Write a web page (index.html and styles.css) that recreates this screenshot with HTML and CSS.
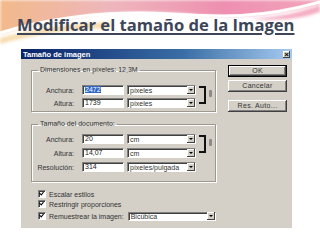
FILE: index.html
```html
<!DOCTYPE html>
<html lang="es">
<head>
	<meta charset="UTF-8">
	<title>Modificar el tamaño de la Imagen</title>
	<link rel="stylesheet" href="styles.css">
</head>
<body>

	<svg class="deco" width="320" height="50" viewBox="0 0 320 50">
		<defs>
			<linearGradient id="wash" x1="0" y1="0" x2="1" y2="0">
				<stop offset="0" stop-color="#f2b98a"/>
				<stop offset="0.35" stop-color="#eeb6bc"/>
				<stop offset="0.7" stop-color="#ee8fb0"/>
				<stop offset="1" stop-color="#f2a6bd"/>
			</linearGradient>
			<filter id="soft"><feGaussianBlur stdDeviation="1.8"/></filter>
		</defs>
		<path d="M0 0 H320 V4 C280 14 240 19 200 15 C150 10 100 12 60 20 C30 26 10 30 0 34 Z" fill="url(#wash)" filter="url(#soft)"/>
		<path d="M0 38 C30 30 60 24 110 22 L110 28 C60 30 30 36 0 44 Z" fill="#f4d096" opacity="0.75" filter="url(#soft)"/>
		<path d="M250 19 C280 17 302 12 320 5 V12 C300 19 280 21 250 19 Z" fill="#f29ab5" opacity="0.8" filter="url(#soft)"/>
		<path d="M0 33 C40 20 100 10 170 14 C220 17 260 19 320 2" stroke="#fff" stroke-width="3" fill="none"/>
	</svg>

	<h1 class="title">Modificar el tamaño de la Imagen</h1>

	<div class="dialog">
		<div class="titlebar">
			<span>Tamaño de imagen</span>
			<span class="close">×</span>
		</div>
		<div class="dialog-body">
			<div class="main">

				<fieldset class="group group-pixels">
					<legend>Dimensiones en píxeles: 12,3M</legend>
					<div class="linked">
						<div class="rows">
							<div class="row">
								<span class="label">Anchura:</span>
								<span class="field"><span class="selected">2472</span></span>
								<span class="select"><span>píxeles</span><i class="arrow"></i></span>
							</div>
							<div class="row">
								<span class="label">Altura:</span>
								<span class="field">1739</span>
								<span class="select"><span>píxeles</span><i class="arrow"></i></span>
							</div>
						</div>
						<span class="bracket"></span>
						<span class="chain"></span>
					</div>
				</fieldset>

				<fieldset class="group group-doc">
					<legend>Tamaño del documento:</legend>
					<div class="linked">
						<div class="rows">
							<div class="row">
								<span class="label">Anchura:</span>
								<span class="field">20</span>
								<span class="select"><span>cm</span><i class="arrow"></i></span>
							</div>
							<div class="row">
								<span class="label">Altura:</span>
								<span class="field">14,07</span>
								<span class="select"><span>cm</span><i class="arrow"></i></span>
							</div>
							<div class="row">
								<span class="label">Resolución:</span>
								<span class="field">314</span>
								<span class="select"><span>píxeles/pulgada</span><i class="arrow"></i></span>
							</div>
						</div>
						<span class="bracket"></span>
						<span class="chain"></span>
					</div>
				</fieldset>

				<div class="checks">
					<div class="check"><span class="box"></span>Escalar estilos</div>
					<div class="check"><span class="box"></span>Restringir proporciones</div>
					<div class="check check-select">
						<span class="box"></span>Remuestrear la imagen:
						<span class="select select-wide"><span>Bicúbica</span><i class="arrow"></i></span>
					</div>
				</div>

			</div>
			<div class="buttons">
				<div class="button button-default">OK</div>
				<div class="button">Cancelar</div>
				<div class="button button-gap">Res. Auto...</div>
			</div>
		</div>
	</div>

</body>
</html>
```

FILE: styles.css
```css
body {
	margin: 0;
	width: 320px;
	height: 240px;
	overflow: hidden;
	position: relative;
	background: #fff;
	font-family: "Liberation Sans", Arial, sans-serif;
}
.deco {
	position: absolute;
	top: 0;
	left: 0;
}
.title {
	position: relative;
	margin: 0;
	padding: 17px 0 0 17px;
	height: 32px;
	box-sizing: border-box;
	font-family: "Open Sans", sans-serif;
	font-size: 16.6px;
	line-height: 16px;
	font-weight: 700;
	color: #3c4658;
	text-decoration: underline;
	text-decoration-thickness: 2px;
	text-underline-offset: 2px;
}

/* dialog */
.dialog {
	position: relative;
	margin: 17px 0 0 21px;
	width: 271px;
	height: 179px;
	background: #d4d0c8;
	font-size: 7px;
	color: #333;
}
.titlebar {
	display: flex;
	align-items: center;
	justify-content: space-between;
	height: 10px;
	padding: 0 2px;
	background: linear-gradient(90deg, #0a246a, #3a6ea5 60%, #a6caf0);
	color: #fff;
	font-weight: 700;
	font-size: 7.5px;
}
.close {
	width: 7px;
	height: 7px;
	line-height: 7px;
	text-align: center;
	background: #d4d0c8;
	color: #000;
	font-size: 8px;
	box-shadow: inset -1px -1px 0 #404040, inset 1px 1px 0 #fff;
}
.dialog-body {
	display: flex;
	padding: 6px 5px 0 10px;
}
.main { width: 185px }

.group {
	margin: 1px 0 0;
	padding: 11px 0 3px;
	border: 1px solid #9c9890;
	box-shadow: 1px 1px 0 #fff, inset 1px 1px 0 #fff;
}
.group legend {
	margin-left: 6px;
	padding: 0 2px;
	line-height: 8px;
}
.group-doc {
	margin-top: 8px;
	padding: 6px 0 9px;
}
.group-doc .rows { gap: 4px }

.linked {
	display: flex;
	align-items: flex-start;
}
.rows {
	display: flex;
	flex-direction: column;
	gap: 3px;
}
.row {
	display: flex;
	align-items: center;
	height: 10px;
}
.label {
	width: 42px;
	text-align: right;
	margin-right: 8px;
}
.field {
	width: 42px;
	height: 10px;
	box-sizing: border-box;
	padding-left: 2px;
	line-height: 8px;
	background: #fff;
	border: 1px solid;
	border-color: #808080 #fff #fff #808080;
	box-shadow: inset 1px 1px 0 #404040;
	color: #222;
}
.selected {
	background: #3167c4;
	color: #fff;
}
.select {
	display: flex;
	align-items: center;
	justify-content: space-between;
	width: 69px;
	height: 10px;
	margin-left: 3px;
	box-sizing: border-box;
	padding-left: 2px;
	background: #fff;
	border: 1px solid;
	border-color: #808080 #fff #fff #808080;
	box-shadow: inset 1px 1px 0 #404040;
}
.arrow {
	display: flex;
	align-items: center;
	justify-content: center;
	width: 8px;
	height: 8px;
	background: #d4d0c8;
	box-shadow: inset -1px -1px 0 #404040, inset 1px 1px 0 #fff;
}
.arrow::after {
	content: "";
	border: 2px solid transparent;
	border-top: 2px solid #000;
	border-bottom: 0;
}
.bracket {
	width: 5px;
	height: 14px;
	margin: 1px 0 0 3px;
	border: 2px solid #111;
	border-left: 0;
}
.chain {
	width: 3px;
	height: 7px;
	margin: 5px 0 0 3px;
	background: #8e8a84;
	border-radius: 1px;
}

/* checkboxes */
.checks {
	display: flex;
	flex-direction: column;
	margin: 7px 0 0 7px;
}
.check {
	display: flex;
	align-items: center;
	height: 10px;
	white-space: nowrap;
}
.check-select { height: 12px; margin-top: 1px }
.box {
	width: 6px;
	height: 6px;
	margin-right: 3px;
	background: #fff;
	border: 1px solid;
	border-color: #808080 #fff #fff #808080;
	box-shadow: inset 1px 1px 0 #404040;
	position: relative;
}
.box::after {
	content: "";
	position: absolute;
	left: 1px;
	top: 0;
	width: 2px;
	height: 3px;
	border: solid #000;
	border-width: 0 1.5px 1.5px 0;
	transform: rotate(40deg);
}
.select-wide {
	width: 88px;
	height: 9px;
	margin-left: 4px;
}

/* buttons */
.buttons {
	display: flex;
	flex-direction: column;
	gap: 3px;
	margin-left: 12px;
}
.button {
	width: 59px;
	height: 12px;
	box-sizing: border-box;
	line-height: 12px;
	text-align: center;
	background: #d4d0c8;
	box-shadow: inset -1px -1px 0 #404040, inset 1px 1px 0 #fff, inset -2px -2px 0 #808080;
	letter-spacing: 0.3px;
}
.button-default {
	border: 1px solid #000;
	line-height: 10px;
}
.button-gap { margin-top: 5px }
```
